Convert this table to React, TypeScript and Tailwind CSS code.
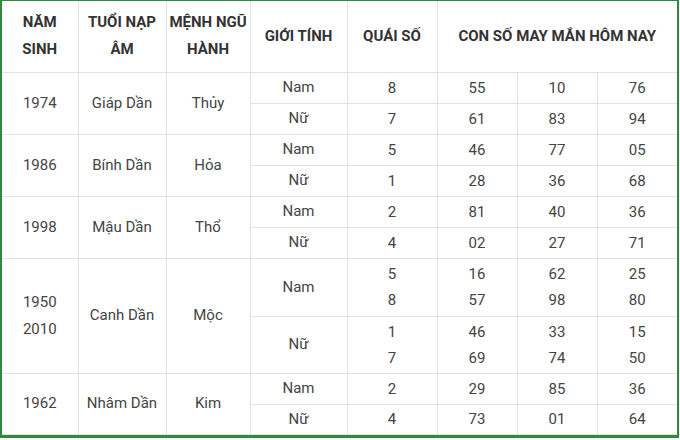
import React from "react";

type Sub = { g: string; q: string[]; n: string[][]; h: string };
type Group = { year: string[]; tuoi: string; menh: string; subs: Sub[] };

const data: Group[] = [
  {
    year: ["1974"],
    tuoi: "Giáp Dần",
    menh: "Thủy",
    subs: [
      { g: "Nam", q: ["8"], n: [["55"], ["10"], ["76"]], h: "h-[31px]" },
      { g: "Nữ", q: ["7"], n: [["61"], ["83"], ["94"]], h: "h-[31px]" },
    ],
  },
  {
    year: ["1986"],
    tuoi: "Bính Dần",
    menh: "Hỏa",
    subs: [
      { g: "Nam", q: ["5"], n: [["46"], ["77"], ["05"]], h: "h-[31px]" },
      { g: "Nữ", q: ["1"], n: [["28"], ["36"], ["68"]], h: "h-[31px]" },
    ],
  },
  {
    year: ["1998"],
    tuoi: "Mậu Dần",
    menh: "Thổ",
    subs: [
      { g: "Nam", q: ["2"], n: [["81"], ["40"], ["36"]], h: "h-[31px]" },
      { g: "Nữ", q: ["4"], n: [["02"], ["27"], ["71"]], h: "h-[31px]" },
    ],
  },
  {
    year: ["1950", "2010"],
    tuoi: "Canh Dần",
    menh: "Mộc",
    subs: [
      { g: "Nam", q: ["5", "8"], n: [["16", "57"], ["62", "98"], ["25", "80"]], h: "h-[58px]" },
      { g: "Nữ", q: ["1", "7"], n: [["46", "69"], ["33", "74"], ["15", "50"]], h: "h-[57px]" },
    ],
  },
  {
    year: ["1962"],
    tuoi: "Nhâm Dần",
    menh: "Kim",
    subs: [
      { g: "Nam", q: ["2"], n: [["29"], ["85"], ["36"]], h: "h-[31px]" },
      { g: "Nữ", q: ["4"], n: [["73"], ["01"], ["64"]], h: "h-[30px]" },
    ],
  },
];

const cell = "border-r border-b border-[#e2e2e2] text-center align-middle p-0";
const lastCell = "border-b border-[#e2e2e2] text-center align-middle p-0";

function Lines({ items }: { items: string[] }) {
  return (
    <div className="flex flex-col items-center leading-[26px]">
      {items.map((t, i) => (
        <span key={i}>{t}</span>
      ))}
    </div>
  );
}

export default function App() {
  return (
    <div className="w-[680px] h-[440px] bg-white" style={{ fontFamily: "Roboto, 'Noto Sans', sans-serif" }}>
      <div className="w-[679px] border-l-2 border-r-2 border-t border-b-[3px] border-[#2f8a3b] bg-white">
        <table className="w-[675px] table-fixed border-collapse text-[15px] text-[#444]">
          <colgroup>
            <col className="w-[76px]" />
            <col className="w-[88px]" />
            <col className="w-[84px]" />
            <col className="w-[97px]" />
            <col className="w-[90px]" />
            <col className="w-[80px]" />
            <col className="w-[80px]" />
            <col className="w-[80px]" />
          </colgroup>
          <thead>
            <tr className="h-[71px] font-bold text-[#333] leading-[27px]">
              <th className={cell + " font-bold"}>
                NĂM
                <br />
                SINH
              </th>
              <th className={cell + " font-bold"}>
                TUỔI NẠP
                <br />
                ÂM
              </th>
              <th className={cell + " font-bold"}>
                MỆNH NGŨ
                <br />
                HÀNH
              </th>
              <th className={cell + " font-bold"}>GIỚI TÍNH</th>
              <th className={cell + " font-bold"}>QUÁI SỐ</th>
              <th colSpan={3} className={lastCell + " font-bold"}>
                CON SỐ MAY MẮN HÔM NAY
              </th>
            </tr>
          </thead>
          <tbody>
            {data.map((grp) =>
              grp.subs.map((s, si) => (
                <tr key={grp.tuoi + si} className={s.h}>
                  {si === 0 && (
                    <>
                      <td rowSpan={2} className={cell}>
                        <div className="flex flex-col items-center leading-[27px]">
                          {grp.year.map((y) => (
                            <span key={y}>{y}</span>
                          ))}
                        </div>
                      </td>
                      <td rowSpan={2} className={cell}>
                        {grp.tuoi}
                      </td>
                      <td rowSpan={2} className={cell}>
                        {grp.menh}
                      </td>
                    </>
                  )}
                  <td className={cell}>{s.g}</td>
                  <td className={cell}>
                    <Lines items={s.q} />
                  </td>
                  <td className={cell}>
                    <Lines items={s.n[0]} />
                  </td>
                  <td className={cell}>
                    <Lines items={s.n[1]} />
                  </td>
                  <td className={lastCell}>
                    <Lines items={s.n[2]} />
                  </td>
                </tr>
              ))
            )}
          </tbody>
        </table>
      </div>
    </div>
  );
}
